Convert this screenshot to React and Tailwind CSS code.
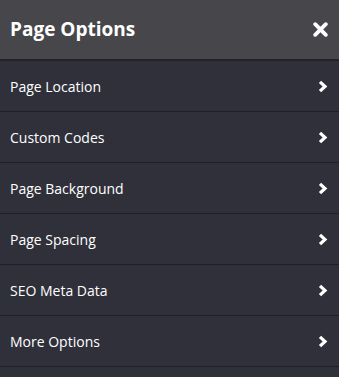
import React from 'react'

const items = ['Page Location', 'Custom Codes', 'Page Background', 'Page Spacing', 'SEO Meta Data', 'More Options']

function Chevron() {
  return (
    <svg width="11" height="13" viewBox="0 0 11 13" className="shrink-0">
      <polyline points="3,1.8 8,6.5 3,11.2" fill="none" stroke="#ffffff" strokeWidth="3.2" strokeLinejoin="miter" strokeLinecap="butt" />
    </svg>
  )
}

function CloseIcon() {
  return (
    <svg width="15" height="15" viewBox="0 0 15 15" className="shrink-0">
      <path d="M2.2 2.2 L12.8 12.8 M12.8 2.2 L2.2 12.8" stroke="#ffffff" strokeWidth="3.8" strokeLinecap="round" />
    </svg>
  )
}

export default function App() {
  return (
    <div className="w-[339px] h-[377px] overflow-hidden bg-[#30303a]" style={{ fontFamily: '"Open Sans", sans-serif' }}>
      <div className="flex h-[61px] items-center justify-between bg-[#47474b] pl-[10px] pr-[11px] pb-[1px] border-b-2 border-[#232327]">
        <h1 className="text-[19px] font-bold text-white leading-none">Page Options</h1>
        <CloseIcon />
      </div>
      <ul>
        {items.map((item) => (
          <li key={item} className="flex h-[51px] items-center justify-between border-b border-[#1f1f25] pl-[10px] pr-[11px]">
            <span className="text-[14px] text-white">{item}</span>
            <Chevron />
          </li>
        ))}
      </ul>
    </div>
  )
}
